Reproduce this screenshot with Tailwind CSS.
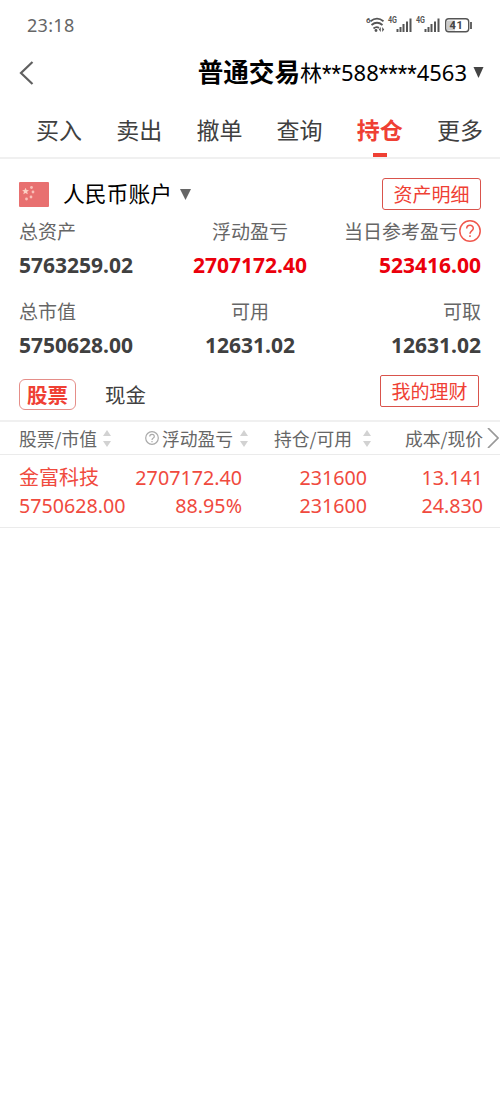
<!DOCTYPE html>
<html lang="zh-CN">
<head>
  <meta charset="UTF-8" />
  <meta name="viewport" content="width=device-width, initial-scale=1.0" />
  <title>普通交易 - 持仓</title>
  <script src="https://cdn.jsdelivr.net/npm/@tailwindcss/browser@4"></script>
</head>
<body class="bg-white font-['Noto_Sans','Noto_Sans_CJK_SC',sans-serif] text-[#404040] overflow-hidden whitespace-nowrap">

  <!-- Status bar -->
  <div class="flex h-[50px] items-center justify-between pl-[27px] pr-[28px] text-[#666]">
    <span class="text-[18px] leading-none tracking-[0.3px]">23:18</span>
    <svg class="h-[22px] w-[106px]" viewBox="0 0 106 22" fill="none" stroke="#555">
      <g font-family="Roboto" font-size="9" font-weight="700" fill="#555" stroke="none">
        <text x="0" y="8.500" font-size="8">6</text>
        <text x="22" y="8.500" textLength="9" lengthAdjust="spacingAndGlyphs">4G</text>
        <text x="50" y="8.500" textLength="9" lengthAdjust="spacingAndGlyphs">4G</text>
      </g>
      <path d="M4.500 7.200q6.500-5 13 0M5.500 11q5.500-4.500 11 0M7.500 14.500q3-2.500 5.500 -.5" stroke-width="1.800" />
      <circle cx="10" cy="16.500" r="1.400" fill="#555" stroke="none" />
      <path d="M14.800 13v5l-2-2.500zM16.200 13v5l2-2.500z" fill="#555" stroke="none" />
      <path d="M31.500 15v3M34.500 13v5M37.500 10v8M41 7.500v10.500M44.500 4.500v13.500M59.500 15v3M62.500 13v5M65.500 10v8M69 7.500v10.500M72.500 4.500v13.500" stroke-width="2" />
      <rect x="81" y="6.500" width="8" height="10" fill="#ccc" stroke="none" />
      <rect x="79.700" y="4.700" width="23" height="13" rx="3" stroke-width="1.400" />
      <path d="M105 8v7" stroke-width="1.800" />
      <text x="83.500" y="15" font-family="Roboto" font-size="11" font-weight="700" fill="#444" stroke="none" letter-spacing=".8">41</text>
    </svg>
  </div>

  <!-- Header -->
  <header class="flex h-[46px] items-center justify-between pl-[19px] pr-[16px] text-black">
    <svg class="h-[24px] w-[15px]" viewBox="0 0 15 24" fill="none" stroke="#606060" stroke-width="2.200"><path d="M13.500 1L2 12l11.500 11" /></svg>
    <div class="flex items-center">
      <h1 class="text-[25.600px] font-bold leading-none">普通交易</h1>
      <span class="text-[22px] leading-none">林<span class="font-['Roboto']">**</span>588<span class="font-['Roboto']">****</span>4563</span>
      <svg class="ml-[6px] mb-[2px] h-[11px] w-[11px]" viewBox="0 0 11 11"><path d="M.5 0h10L5.500 11z" fill="#444" /></svg>
    </div>
  </header>

  <!-- Tabs -->
  <nav class="grid h-[63px] grid-cols-6 border-b-2 border-[#f0f0f0] pl-[19px] text-center text-[23px] leading-[68px]">
    <a href="#">买入</a>
    <a href="#">卖出</a>
    <a href="#">撤单</a>
    <a href="#">查询</a>
    <a href="#" class="relative h-[61px] font-bold text-[#ef4034]">持仓
      <span class="absolute bottom-0 left-1/2 h-[4px] w-[14px] -translate-x-1/2 bg-[#ef4034]"></span>
    </a>
    <a href="#">更多</a>
  </nav>

  <!-- Account -->
  <section class="px-[19px] pt-[19px]">
    <div class="flex h-[32px] items-center">
      <svg class="h-[25px] w-[30px]" viewBox="0 0 30 25">
        <rect width="30" height="25" rx="1" fill="#e87070" />
        <path d="M6.500 5.800l1.100 2.300 2.400.1-1.900 1.600.7 2.400-2.300-1.300-2.200 1.300.7-2.400-1.900-1.600 2.400-.1z" fill="#fbd0c4" />
        <g fill="#f8c0b8"><circle cx="12.500" cy="5.500" r="1.400" /><circle cx="14" cy="10" r="1.400" /><circle cx="12" cy="15" r="1.400" /><circle cx="7.500" cy="17" r="1.400" /></g>
      </svg>
      <span class="ml-[14px] text-[21.800px] leading-none text-black">人民币账户</span>
      <svg class="ml-[8px] h-[11px] w-[11px]" viewBox="0 0 11 11"><path d="M0 0h11L5.500 11z" fill="#666" /></svg>
      <button class="ml-auto h-[32px] w-[99px] rounded-[3px] border border-[#d9534c] text-[19px] leading-[32px] text-[#ef4034]">资产明细</button>
    </div>

    <div class="mt-[2px] grid grid-cols-3 text-[19px] leading-[40px] text-[#666]">
      <div>总资产</div>
      <div class="text-center">浮动盈亏</div>
      <div class="flex h-[40px] items-center justify-end">当日参考盈亏
        <svg class="ml-px mb-[2px] h-[22px] w-[22px] shrink-0" viewBox="0 0 22 22" fill="none" stroke="#f0574d" stroke-width="1.500"><circle cx="11" cy="11" r="10.200" /><path d="M7.700 8.600c0-4.300 6.600-4.300 6.600-.3 0 2.600-3.300 2.700-3.300 5.400M11 15.200v1.800" /></svg>
      </div>
    </div>
    <div class="-mt-px grid grid-cols-3 text-[21px] font-bold leading-[28px]">
      <div>5763259.02</div>
      <div class="text-center text-[#eb000c]">2707172.40</div>
      <div class="text-right text-[#eb000c]">523416.00</div>
    </div>
    <div class="mt-[13px] grid grid-cols-3 text-[19px] leading-[40px] text-[#666]">
      <div>总市值</div>
      <div class="text-center">可用</div>
      <div class="text-right">可取</div>
    </div>
    <div class="-mt-px grid grid-cols-3 text-[21px] font-bold leading-[28px]">
      <div>5750628.00</div>
      <div class="text-center">12631.02</div>
      <div class="text-right">12631.02</div>
    </div>

    <div class="flex h-[61px] items-start pt-[16px]">
      <button class="mt-[4px] h-[31px] w-[57px] rounded-[6px] border border-[#e58e89] text-[20.500px] font-bold leading-[31px] text-[#ef4034]">股票</button>
      <span class="ml-[29px] mt-[4px] text-[20.500px] leading-[33px]">现金</span>
      <button class="ml-auto mr-[2px] h-[32px] w-[99px] rounded-[2px] border border-[#d9534c] text-[19px] leading-[32px] text-[#ef4034]">我的理财</button>
    </div>
  </section>

  <!-- Positions header -->
  <div class="flex h-[35px] items-center border-b border-t-2 border-b-[#ebebeb] border-t-[#f0f0f0] pl-[19px] font-['Noto_Sans_CJK_SC'] text-[17.800px] text-[#666]">
    <div class="flex w-[126px] items-center">股票/市值
      <svg class="ml-[6px] h-[17px] w-[8px]" viewBox="0 0 8 17" fill="#d2d2d2"><path d="M4 0l4 6H0zM4 17l4-6H0z" /></svg>
    </div>
    <div class="flex w-[129px] items-center">
      <svg class="mr-[3px] h-[14px] w-[14px]" viewBox="0 0 14 14" fill="none" stroke="#aaa" stroke-width="1.200"><circle cx="7" cy="7" r="6.300" /><path d="M4.700 5.600c0-3 4.600-3 4.600-.2 0 1.700-2.300 1.800-2.300 3.500M7 9.900v1.300" /></svg>
      浮动盈亏
      <svg class="ml-[7px] h-[17px] w-[8px]" viewBox="0 0 8 17" fill="#d2d2d2"><path d="M4 0l4 6H0zM4 17l4-6H0z" /></svg>
    </div>
    <div class="flex w-[131px] items-center">持仓/可用
      <svg class="ml-[11px] h-[17px] w-[8px]" viewBox="0 0 8 17" fill="#d2d2d2"><path d="M4 0l4 6H0zM4 17l4-6H0z" /></svg>
    </div>
    <div>成本/现价</div>
    <svg class="ml-[4px] h-[20px] w-[12px] shrink-0" viewBox="0 0 12 20" fill="none" stroke="#999" stroke-width="1.700"><path d="M1 0l10 10L1 20" /></svg>
  </div>

  <!-- Position -->
  <div class="grid h-[73px] grid-cols-[110px_113px_125px_116px] content-start border-b border-[#ebebeb] pl-[19px] pt-[9px] text-right text-[19.700px] leading-[28px] text-[#f04a3e]">
    <div class="text-left text-[20px]">金富科技</div>
    <div>2707172.40</div>
    <div>231600</div>
    <div>13.141</div>
    <div class="text-left">5750628.00</div>
    <div>88.95%</div>
    <div>231600</div>
    <div>24.830</div>
  </div>

</body>
</html>
